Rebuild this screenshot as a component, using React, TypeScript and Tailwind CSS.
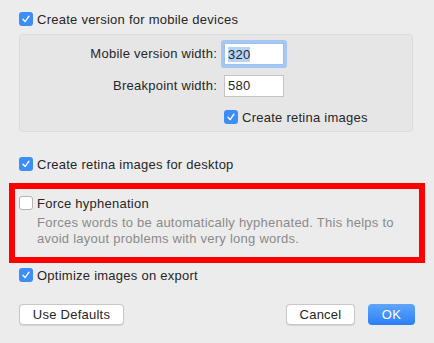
import React from 'react';

const Check: React.FC<{ checked?: boolean }> = ({ checked }) =>
  checked ? (
    <span className="w-[14px] h-[14px] shrink-0 rounded-[3px] bg-[#3c8ef6] flex items-center justify-center">
      <svg width="10" height="10" viewBox="0 0 10 10" fill="none">
        <path d="M2 5.3 L4.1 7.6 L8 2.2" stroke="white" strokeWidth="1.4" strokeLinecap="round" strokeLinejoin="round" />
      </svg>
    </span>
  ) : (
    <span className="w-[14px] h-[14px] shrink-0 rounded-[3px] bg-white border border-[#b4b4b4]" />
  );

const CheckRow: React.FC<{ checked?: boolean; label: string; className?: string }> = ({ checked, label, className }) => (
  <div className={`flex items-center gap-[4px] h-[14px] ${className ?? ''}`}>
    <Check checked={checked} />
    <span className="leading-none">{label}</span>
  </div>
);

export default function App() {
  return (
    <div
      className="w-[434px] h-[343px] bg-[#ececec] text-[13px] tracking-[0.25px] text-[#262626] overflow-hidden"
      style={{ fontFamily: '"Liberation Sans", Arial, sans-serif' }}
    >
      <div className="pt-[12px] pl-[19px]">
        <CheckRow checked label="Create version for mobile devices" />
      </div>

      {/* mobile settings panel */}
      <div className="mt-[8px] ml-[19px] w-[394px] h-[98px] bg-[#e6e6e6] border border-[#dcdcdc] rounded-[4px] pt-[8px]">
        <div className="flex items-center h-[22px]">
          <span className="w-[197px] text-right">Mobile version width:</span>
          <div className="ml-[7px] w-[60px] h-[22px] bg-white border border-[#9fc1f2] ring-[3px] ring-[#a6c6f3] rounded-[1px] flex items-center pl-[3px]">
            <span className="bg-[#b5d4fb] leading-[15px]">320</span>
          </div>
        </div>
        <div className="flex items-center h-[22px] mt-[10px]">
          <span className="w-[197px] text-right">Breakpoint width:</span>
          <div className="ml-[7px] w-[60px] h-[22px] bg-white border border-[#c4c4c4] flex items-center pl-[3px]">
            580
          </div>
        </div>
        <div className="mt-[13px] pl-[204px]">
          <CheckRow checked label="Create retina images" />
        </div>
      </div>

      <div className="mt-[25px] pl-[19px]">
        <CheckRow checked label="Create retina images for desktop" />
      </div>

      {/* highlighted option */}
      <div className="mt-[12px] ml-[9px] w-[416px] h-[80px] border-[6px] border-[#ff0000] pt-[7px] pl-[4px]">
        <CheckRow label="Force hyphenation" />
        <p className="mt-[5px] ml-[18px] text-[#8a8a8a] leading-[16px]">
          Forces words to be automatically hyphenated. This helps to
          <br />
          avoid layout problems with very long words.
        </p>
      </div>

      <div className="mt-[5px] pl-[19px]">
        <CheckRow checked label="Optimize images on export" />
      </div>

      <div className="mt-[22px] px-[19px] flex items-center">
        <button className="w-[105px] h-[21px] bg-white border border-[#c8c8c8] rounded-[4px] leading-none shadow-[0_0.5px_1px_rgba(0,0,0,0.1)]">
          Use Defaults
        </button>
        <button className="ml-auto w-[69px] h-[21px] bg-white border border-[#c8c8c8] rounded-[4px] leading-none shadow-[0_0.5px_1px_rgba(0,0,0,0.1)]">
          Cancel
        </button>
        <button className="ml-[13px] w-[47px] h-[21px] rounded-[4px] bg-gradient-to-b from-[#5ea5fa] to-[#2a7ff6] text-white leading-none">
          OK
        </button>
      </div>
    </div>
  );
}
